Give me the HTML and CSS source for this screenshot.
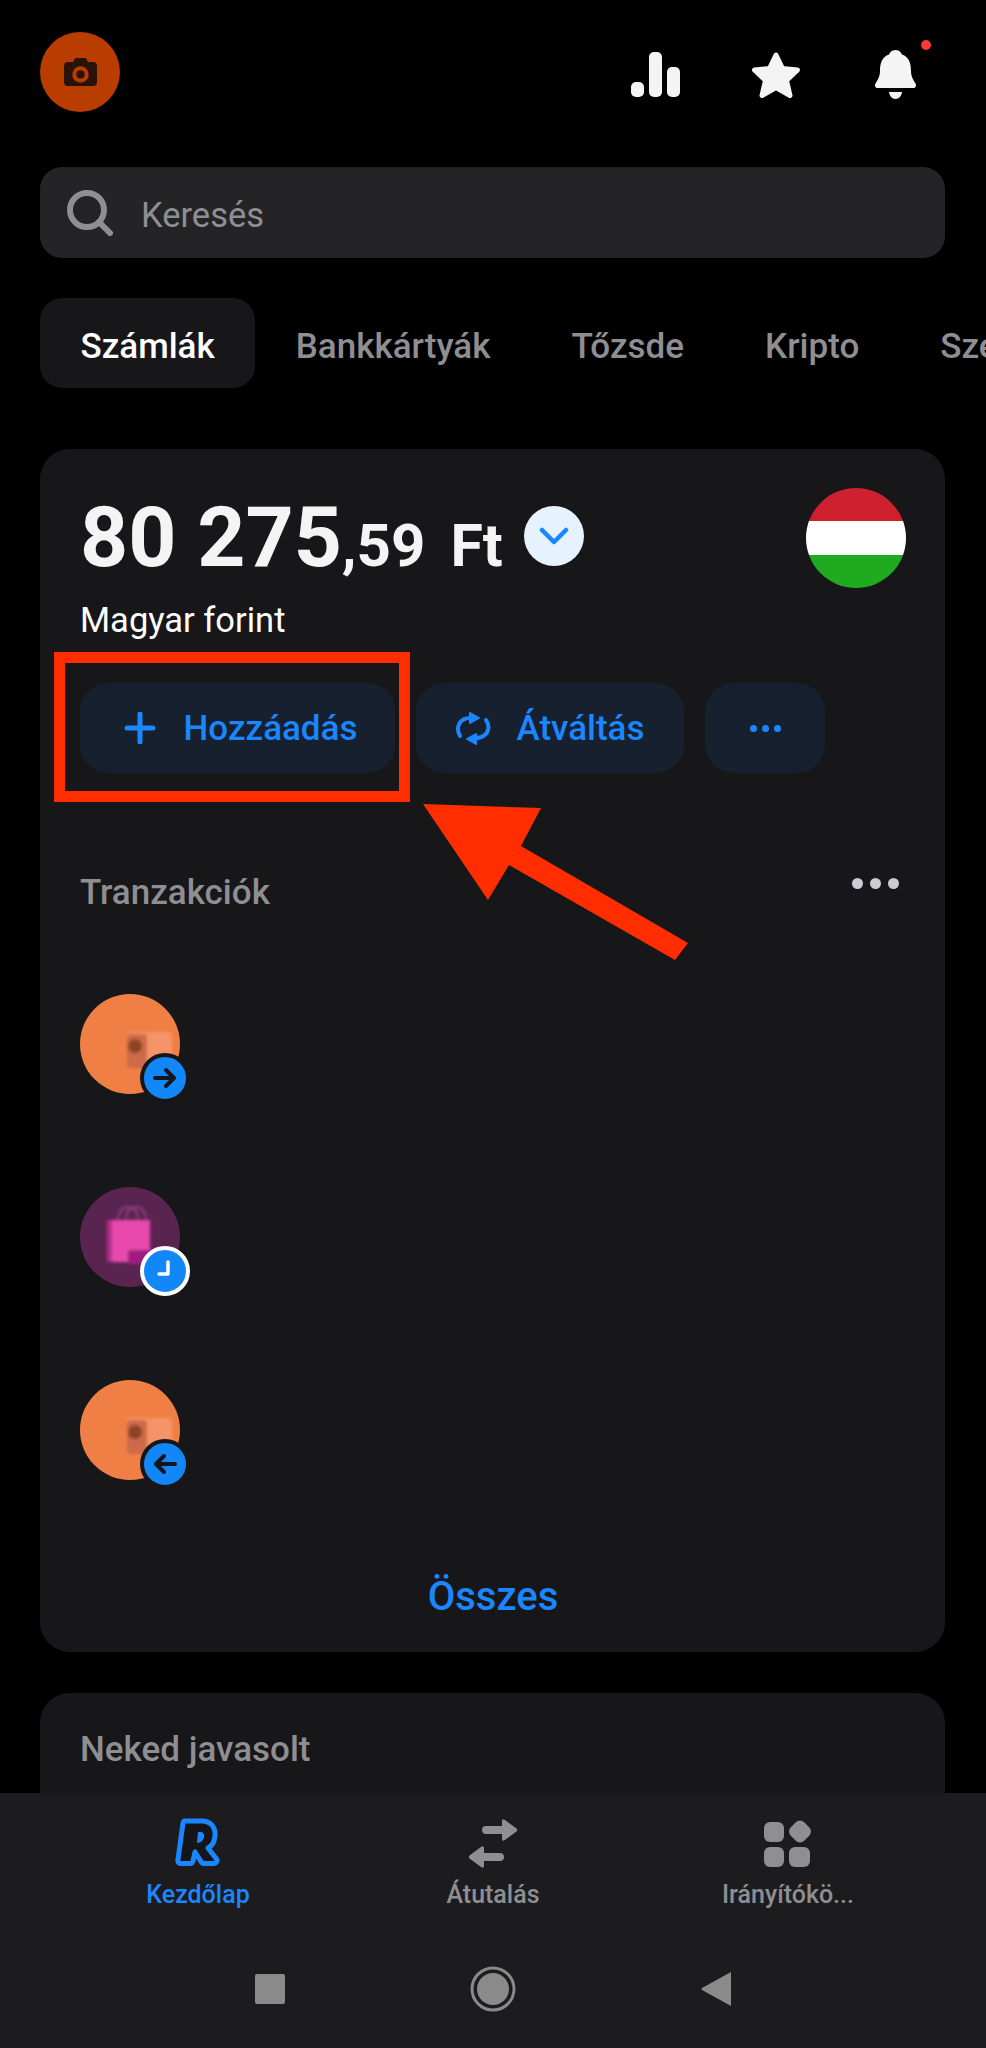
FILE: index.html
```html
<!DOCTYPE html>
<html lang="hu">
<head>
  <meta charset="UTF-8" />
  <meta name="viewport" content="width=device-width, initial-scale=1" />
  <title>Kezdőlap</title>
  <link rel="stylesheet" href="styles.css">
</head>
<body>
  <div class="app">
    <main class="scroll">
      <header class="topbar">
        <div class="profile">
          <svg viewBox="0 0 40 34" width="33" height="28">
            <path fill="#2b1208" fill-rule="evenodd" d="M5 5h6l2-4q.5-1 2-1h10q1.500 0 2 1l2 4h6q5 0 5 5v19q0 5-5 5H5q-5 0-5-5V10q0-5 5-5zm15 5a10 10 0 1 0 0 20 10 10 0 0 0 0-20zm0 5a5 5 0 1 1 0 10 5 5 0 0 1 0-10z"/>
          </svg>
        </div>
        <div class="top-icons">
          <svg viewBox="0 0 60 60" width="60" height="60" fill="#f4f4f4">
            <rect x="5" y="40" width="13" height="15" rx="5"/>
            <rect x="23" y="10" width="13" height="45" rx="5"/>
            <rect x="41" y="25" width="13" height="30" rx="5"/>
          </svg>
          <svg viewBox="0 0 60 60" width="60" height="60">
            <path fill="#f4f4f4" stroke="#f4f4f4" stroke-width="5" stroke-linejoin="round" d="M30 13l6.500 13.500 15 1.500-11 10.500 3.500 15-14-8-14 8 3.500-15-11-10.500 15-1.500z"/>
          </svg>
          <div class="bell">
            <svg viewBox="0 0 60 60" width="60" height="60" fill="#f4f4f4">
              <path d="M29.500 8c4 0 6 3 6.500 4.500C43 15 45 21 45 29c0 6 3 10 4.500 12.500 1 2 .5 4.500-2 4.500h-36c-2.500 0-3-2.500-2-4.500C11 39 14 35 14 29c0-8 2-14 9-16.500C23.500 11 25.500 8 29.500 8z"/>
              <path d="M23 50h13c-.5 4-3 7-6.500 7S23.500 54 23 50z"/>
            </svg>
            <span class="red-dot"></span>
          </div>
        </div>
      </header>

      <div class="search">
        <svg viewBox="0 0 46 46" width="46" height="46" fill="none" stroke="#8e8e93" stroke-width="6" stroke-linecap="round">
          <circle cx="20" cy="20" r="17"/>
          <path d="M32 32l11 11"/>
        </svg>
        <span>Keresés</span>
      </div>

      <nav class="tabs">
        <a class="tab active">Számlák</a>
        <a class="tab">Bankkártyák</a>
        <a class="tab">Tőzsde</a>
        <a class="tab">Kripto</a>
        <a class="tab">Széf</a>
      </nav>

      <section class="card account">
        <div class="account-head">
          <div class="amount">
            <span class="whole">80 275</span><span class="cents">,59</span><span class="currency">Ft</span>
            <span class="chevron">
              <svg viewBox="0 0 30 20" width="30" height="20" fill="none" stroke="#1a86ff" stroke-width="4.500" stroke-linecap="round" stroke-linejoin="round"><path d="M3 4l12 12L27 4"/></svg>
            </span>
          </div>
          <div class="flag"><i class="red"></i><i class="white"></i><i class="green"></i></div>
        </div>
        <div class="currency-name">Magyar forint</div>

        <div class="actions">
          <button class="action add">
            <svg viewBox="0 0 32 32" width="32" height="32" stroke="#1a86ff" stroke-width="5" stroke-linecap="round"><path d="M16 2v28M3 16h26"/></svg>
            Hozzáadás
          </button>
          <button class="action swap">
            <svg viewBox="0 0 36 36" width="36" height="36" fill="none" stroke="#1a86ff" stroke-width="4" stroke-linecap="round">
              <path d="M5 26C0 17 5 8 15 8h2M31 10c6 9 0 18-10 18h-2"/>
              <path fill="#1a86ff" stroke-width="2" stroke-linejoin="round" d="M15 3l9 5-9 5zM21 24l-9 5 9 5z"/>
            </svg>
            Átváltás
          </button>
          <button class="action more"><i></i><i></i><i></i></button>
        </div>

        <div class="tx-head">
          <span>Tranzakciók</span>
          <div class="tx-dots"><i></i><i></i><i></i></div>
        </div>

        <ul class="tx-list">
          <li class="thumb orange">
            <svg viewBox="0 0 100 100" width="100" height="100">
              <g filter="url(#soft)">
                <rect x="47" y="38" width="45" height="36" rx="4" fill="#f49468"/>
                <rect x="47" y="40" width="20" height="34" rx="4" fill="#cc6a48"/>
                <circle cx="55" cy="52" r="7" fill="#8a4420"/>
              </g>
            </svg>
            <span class="badge">
              <svg viewBox="0 0 24 24" width="24" height="24" fill="none" stroke="#16161a" stroke-width="4" stroke-linecap="round" stroke-linejoin="round"><path d="M2 12h19M13 4l8 8-8 8"/></svg>
            </span>
          </li>
          <li class="thumb plum">
            <svg viewBox="0 0 100 100" width="100" height="100">
              <g filter="url(#soft)">
                <path d="M38 32c0-16 20-16 20 0M46 32c0-16 20-16 20 0" fill="none" stroke="#8f3f7f" stroke-width="2"/>
                <rect x="27" y="33" width="43" height="42" fill="#e848ad"/>
                <rect x="27" y="33" width="5" height="42" fill="#b02f8a"/>
                <rect x="48" y="63" width="28" height="14" rx="2" fill="#a01f80"/>
              </g>
            </svg>
            <span class="badge pending">
              <svg viewBox="0 0 24 24" width="24" height="24" fill="none" stroke="#fff" stroke-width="3.500" stroke-linecap="round" stroke-linejoin="round"><path d="M15 3v12H6"/></svg>
            </span>
          </li>
          <li class="thumb orange">
            <svg viewBox="0 0 100 100" width="100" height="100">
              <g filter="url(#soft)">
                <rect x="47" y="38" width="45" height="36" rx="4" fill="#f49468"/>
                <rect x="47" y="40" width="20" height="34" rx="4" fill="#cc6a48"/>
                <circle cx="55" cy="52" r="7" fill="#8a4420"/>
              </g>
            </svg>
            <span class="badge">
              <svg viewBox="0 0 24 24" width="24" height="24" fill="none" stroke="#16161a" stroke-width="4" stroke-linecap="round" stroke-linejoin="round"><path d="M22 12H3M11 4l-8 8 8 8"/></svg>
            </span>
          </li>
        </ul>

        <a class="see-all">Összes</a>
      </section>

      <section class="card suggested">
        <h3>Neked javasolt</h3>
      </section>
    </main>

    <footer class="bottom">
      <nav class="tabbar">
        <a class="tabbar-item current">
          <svg viewBox="0 0 46 54" width="46" height="54">
            <path fill="#16161a" stroke="#1a86ff" stroke-width="5" stroke-linejoin="round" d="M10 5H27C36 5 41 12 40 20 39.500 26 37 30 33 32L41.500 43C43 45 41 47.500 38.500 47.500H29C27.500 47.500 26.500 47 26 45.500L20 36 18 45C17.500 46.500 16.500 47.500 15 47.500H6C3.500 47.500 2.500 46 3 43.500L8 7C8.300 5.800 9 5 10 5Z"/>
            <path fill="#1a86ff" d="M23 16h2c3 0 4.500 2 4 5-.5 3-3 6-7 6z"/>
          </svg>
          <span>Kezdőlap</span>
        </a>
        <a class="tabbar-item">
          <svg viewBox="0 0 54 54" width="54" height="54" fill="#8e8e93">
            <path d="M20 10H36V5Q36 2 39 4L50.500 12.500Q52 14 50.500 15.500L39 24Q36 26 36 23V18H20a4 4 0 0 1 0-8z"/>
            <path d="M34 37H18V32Q18 29 15 31L3.500 39.500Q2 41 3.500 42.500L15 51Q18 53 18 50V45H34a4 4 0 0 0 0-8z"/>
          </svg>
          <span>Átutalás</span>
        </a>
        <a class="tabbar-item">
          <svg viewBox="0 0 54 54" width="54" height="54" fill="#8e8e93">
            <rect x="3" y="6" width="20" height="20" rx="6"/>
            <rect x="29.500" y="6" width="19" height="19" rx="6" transform="rotate(45 39 15.500)"/>
            <rect x="3" y="31" width="20" height="20" rx="6"/>
            <rect x="28" y="31" width="21" height="20" rx="6"/>
          </svg>
          <span>Irányítókö...</span>
        </a>
      </nav>
      <div class="softkeys">
        <span class="key-square"></span>
        <svg viewBox="0 0 46 46" width="46" height="46"><circle cx="23" cy="23" r="21" fill="none" stroke="#8a8a8a" stroke-width="3"/><circle cx="23" cy="23" r="16" fill="#8a8a8a"/></svg>
        <svg viewBox="0 0 30 34" width="30" height="34"><path fill="#8a8a8a" d="M30 0v34L1 18q-1-1 0-2z"/></svg>
      </div>
    </footer>

    <!-- red callout drawn on top of the account card -->
    <div class="callout-box"></div>
    <svg class="callout-arrow" viewBox="0 0 986 2048" width="986" height="2048">
      <polygon fill="#ff2d00" points="423,804 541,808 521,846 688,943 675,960 509,865 488,900"/>
    </svg>
  </div>

  <svg width="0" height="0" class="defs"><filter id="soft"><feGaussianBlur stdDeviation="1.800"/></filter></svg>
</body>
</html>
```

FILE: styles.css
```css
* {
  box-sizing: border-box;
}

body {
  margin: 0;
  background: #000;
  font-family: Roboto, "Liberation Sans", sans-serif;
  color: #f4f4f4;
}

.defs {
  display: block;
}

.app {
  position: relative;
  width: 986px;
  height: 2048px;
  display: flex;
  flex-direction: column;
  overflow: hidden;
}

.scroll {
  flex: 1;
  min-height: 0;
  overflow: hidden;
  padding: 32px 41px 0 40px;
}

/* top bar */
.topbar {
  display: flex;
  justify-content: space-between;
  align-items: center;
  height: 80px;
  margin-right: 19px;
}

.profile {
  width: 80px;
  height: 80px;
  border-radius: 50%;
  background: #b93c00;
  display: flex;
  align-items: center;
  justify-content: center;
}

.top-icons {
  display: flex;
  gap: 60px;
}

.bell {
  position: relative;
  width: 60px;
  height: 60px;
}

.red-dot {
  position: absolute;
  top: -2px;
  right: -5px;
  width: 10px;
  height: 10px;
  border-radius: 50%;
  background: #f93a37;
}

/* search */
.search {
  margin-top: 55px;
  height: 91px;
  background: #242426;
  border-radius: 22px;
  display: flex;
  align-items: center;
  gap: 28px;
  padding: 0 0 0 27px;
  font-size: 34.500px;
  color: #8e8e93;
}

.search span {
  margin-top: 5px;
}

/* tabs */
.tabs {
  margin-top: 40px;
  display: flex;
  margin-right: -41px;
  overflow: hidden;
  white-space: nowrap;
}

.tab {
  height: 90px;
  line-height: 97px;
  padding: 0 40.500px;
  font-size: 35px;
  font-weight: 500;
  color: #8e8e93;
  border-radius: 22px;
}

.tab.active {
  background: #17171a;
  color: #fff;
}

/* cards */
.card {
  background: #17171a;
  border-radius: 30px;
}

.account {
  margin-top: 61px;
  padding: 39px 39px 33px 40px;
}

.account-head {
  display: flex;
  justify-content: space-between;
}

.amount {
  display: flex;
  align-items: baseline;
  height: 100px;
  line-height: 100px;
  font-weight: 700;
}

.whole {
  font-size: 84px;
}

.cents {
  font-size: 60px;
}

.currency {
  font-size: 59px;
  margin-left: 25px;
}

.chevron {
  align-self: flex-start;
  margin: 18px 0 0 21px;
  width: 60px;
  height: 60px;
  border-radius: 50%;
  background: #e6f3ff;
  display: flex;
  align-items: center;
  justify-content: center;
}

.flag {
  width: 100px;
  height: 100px;
  border-radius: 50%;
  overflow: hidden;
  display: flex;
  flex-direction: column;
}

.flag i {
  flex: 1;
}

.flag .red {
  background: #cf2030;
}

.flag .white {
  background: #fff;
}

.flag .green {
  background: #1faa1f;
}

.currency-name {
  margin-top: 12px;
  line-height: 40px;
  font-size: 34.500px;
  color: #fff;
}

/* action buttons */
.actions {
  margin-top: 43px;
  display: flex;
  gap: 21px;
}

.action {
  height: 90px;
  border: none;
  border-radius: 28px;
  background: #16202e;
  color: #1a86ff;
  font-family: inherit;
  font-size: 35px;
  font-weight: 500;
  display: flex;
  align-items: center;
  justify-content: center;
}

.add {
  width: 315px;
  gap: 28px;
  padding: 0 0 0 6px;
}

.swap {
  width: 268px;
  gap: 25px;
}

.more {
  width: 120px;
  gap: 5px;
}

.more i {
  width: 7px;
  height: 7px;
  border-radius: 50%;
  background: #1a86ff;
}

/* transactions */
.tx-head {
  margin-top: 98px;
  height: 44px;
  display: flex;
  justify-content: space-between;
  font-size: 35px;
  font-weight: 500;
  line-height: 44px;
  color: #8e8e93;
}

.tx-dots {
  display: flex;
  gap: 7px;
  padding: 7px 7px 0 0;
}

.tx-dots i {
  width: 11px;
  height: 11px;
  border-radius: 50%;
  background: #c8ccd4;
}

.tx-list {
  list-style: none;
  margin: 79px 0 0;
  padding: 0;
  display: flex;
  flex-direction: column;
  gap: 93px;
}

.thumb {
  position: relative;
  width: 100px;
  height: 100px;
  border-radius: 50%;
}

.thumb > svg {
  display: block;
}

.orange {
  background: #f07f45;
}

.plum {
  background: #5a2450;
}

.badge {
  position: absolute;
  left: 60px;
  top: 59px;
  width: 50px;
  height: 50px;
  border-radius: 50%;
  background: #1287f8;
  border: 4px solid #17171a;
  display: flex;
  align-items: center;
  justify-content: center;
}

.badge.pending {
  border-color: #fff;
}

.see-all {
  display: block;
  margin-top: 95px;
  text-align: center;
  font-size: 40px;
  font-weight: 500;
  line-height: 44px;
  color: #1a86ff;
}

.suggested {
  margin-top: 41px;
  padding: 37px 40px;
  height: 200px;
}

.suggested h3 {
  margin: 0;
  font-size: 35px;
  font-weight: 500;
  line-height: 40px;
  color: #8e8e93;
}

/* bottom navigation */
.bottom {
  flex: none;
  height: 255px;
  background: #1c1c1e;
}

.tabbar {
  display: flex;
  justify-content: center;
  padding-top: 23px;
}

.tabbar-item {
  width: 295px;
  display: flex;
  flex-direction: column;
  align-items: center;
  gap: 10px;
  font-size: 25px;
  font-weight: 500;
  color: #8e8e93;
}

.tabbar-item.current {
  color: #1a86ff;
}

.softkeys {
  margin-top: 57px;
  display: flex;
  justify-content: center;
  align-items: center;
  gap: 185px;
}

.key-square {
  width: 30px;
  height: 30px;
  background: #8a8a8a;
  border-radius: 2px;
}

/* callout */
.callout-box {
  position: absolute;
  left: 54px;
  top: 652px;
  width: 356px;
  height: 150px;
  border: 11px solid #ff2d00;
}

.callout-arrow {
  position: absolute;
  left: 0;
  top: 0;
  pointer-events: none;
}
```
